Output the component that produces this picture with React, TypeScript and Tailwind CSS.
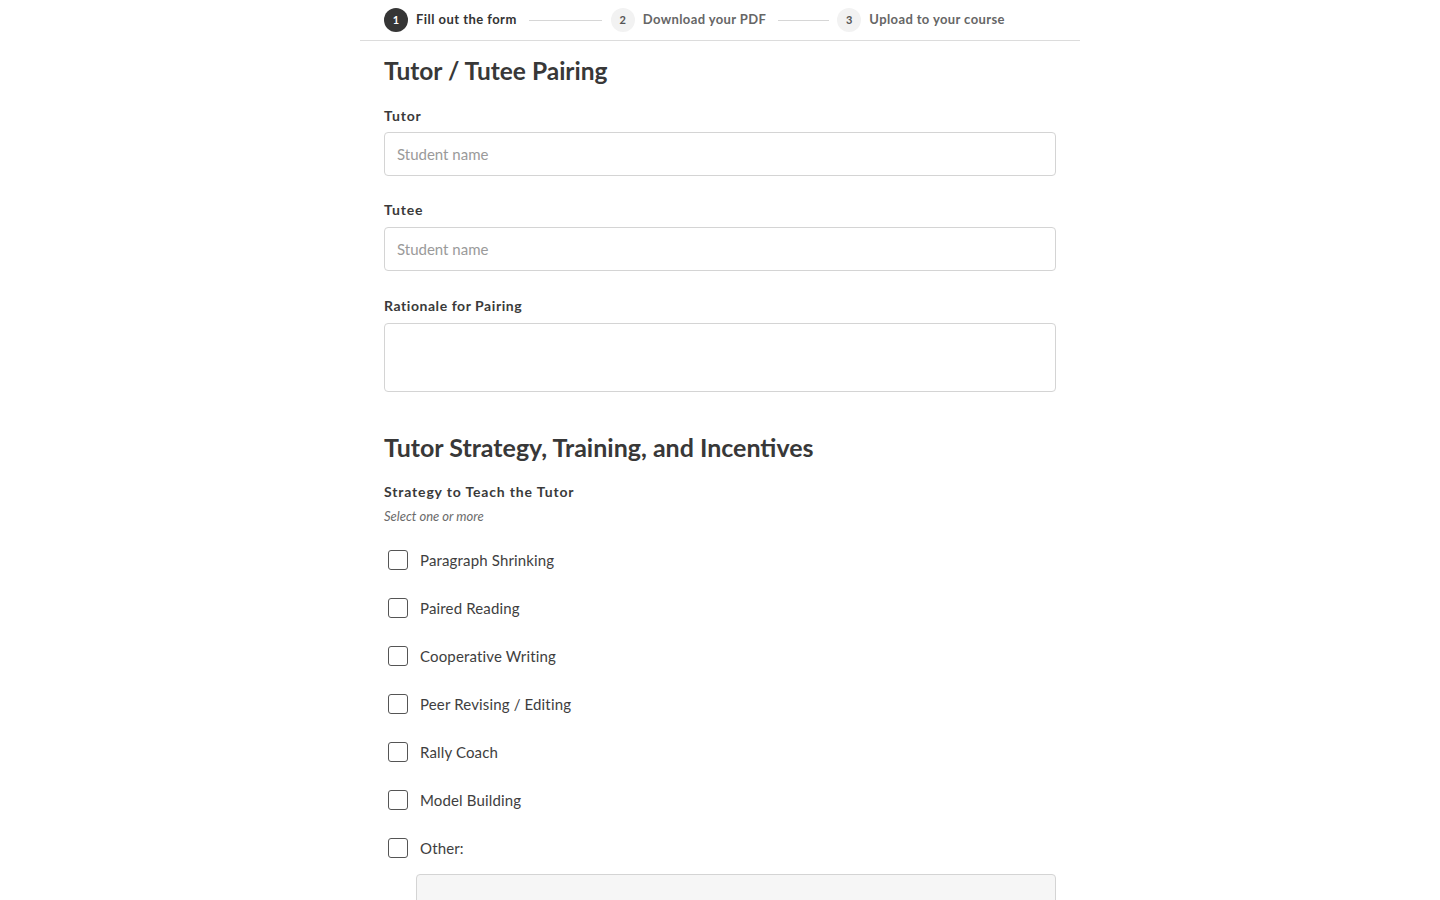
const strategies = [
  "Paragraph Shrinking",
  "Paired Reading",
  "Cooperative Writing",
  "Peer Revising / Editing",
  "Rally Coach",
  "Model Building",
  "Other:",
];

function Step({ n, label, active }: { n: number; label: string; active?: boolean }) {
  return (
    <div className="flex items-center gap-2">
      <span
        className={
          active
            ? "flex h-6 w-6 items-center justify-center rounded-full bg-[#363636] text-[11px] font-bold text-white"
            : "flex h-6 w-6 items-center justify-center rounded-full bg-[#f2f2f2] text-[11px] font-bold text-[#555]"
        }
      >
        {n}
      </span>
      <span
        className={
          active
            ? "text-[13px] font-bold tracking-[0.035em] text-[#333]"
            : "text-[13px] font-bold tracking-[0.03em] text-[#666]"
        }
      >
        {label}
      </span>
    </div>
  );
}

function Label({ children }: { children: React.ReactNode }) {
  return <div className="text-[14px] font-bold leading-5 tracking-[0.06em] text-[#3a3a3a]">{children}</div>;
}

export default function App() {
  return (
    <div className="min-h-screen bg-white font-['Lato',sans-serif] text-[#3a3a3a]">
      <div className="mx-auto w-[720px]">
        {/* Stepper */}
        <div className="flex h-[41px] items-center border-b border-[#dcdcdc] px-6">
          <Step n={1} label="Fill out the form" active />
          <div className="ml-3 mr-[9px] h-px w-[73px] bg-[#d6d6d6]" />
          <Step n={2} label="Download your PDF" />
          <div className="ml-3 mr-2 h-px w-[51px] bg-[#d6d6d6]" />
          <Step n={3} label="Upload to your course" />
        </div>

        <div className="px-6">
          <h1 className="mt-[14px] text-[24.5px] font-bold leading-8 text-[#383838]">Tutor / Tutee Pairing</h1>

          <div className="mt-[19px]">
            <Label>Tutor</Label>
            <input
              placeholder="Student name"
              className="mt-[6px] h-11 w-full rounded border border-[#d4d4d4] px-3 text-[15px] text-[#333] placeholder:text-[#9a9a9a] outline-none"
            />
          </div>

          <div className="mt-6">
            <Label>Tutee</Label>
            <input
              placeholder="Student name"
              className="mt-[7px] h-11 w-full rounded border border-[#d4d4d4] px-3 text-[15px] text-[#333] placeholder:text-[#9a9a9a] outline-none"
            />
          </div>

          <div className="mt-[25px]">
            <div className="text-[14px] font-bold leading-5 tracking-[0.04em] text-[#3a3a3a]">Rationale for Pairing</div>
            <textarea className="mt-[7px] block h-[69px] w-full resize-none rounded border border-[#d4d4d4] px-3 py-2 text-[15px] outline-none" />
          </div>

          <h2 className="mt-[39px] text-[25px] font-bold leading-8 text-[#383838]">
            Tutor Strategy, Training, and Incentives
          </h2>

          <div className="mt-[19px]">
            <Label>Strategy to Teach the Tutor</Label>
            <div className="mt-[5px] text-[13px] italic leading-[18px] text-[#6b6b6b]">Select one or more</div>
          </div>

          <div className="mt-[11px]">
            {strategies.map((s) => (
              <label key={s} className="flex h-12 items-center gap-3 pl-1">
                <span className="h-5 w-5 rounded-[3px] border border-[#555] bg-white" />
                <span className="text-[15px] tracking-[0.01em] text-[#3e3e3e]">{s}</span>
              </label>
            ))}
            <div className="ml-8 mt-[2px] h-11 rounded border border-[#d4d4d4] bg-[#f6f6f6]" />
          </div>
          <div className="h-10" />
        </div>
      </div>
    </div>
  );
}
